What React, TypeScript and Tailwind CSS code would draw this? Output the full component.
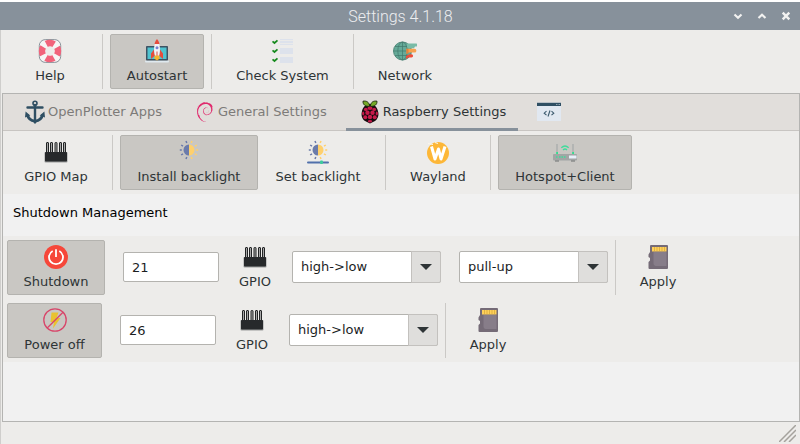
import type { ReactNode } from "react";
import { SiDebian } from "react-icons/si";

const icon = "h-6 w-6 shrink-0";

function HelpIcon() {
  return (
    <svg viewBox="0 0 24 24" className={icon} aria-hidden="true">
      <rect x="1.3" y="0.6" width="21.4" height="22.8" rx="6" fill="#f6f5f5" stroke="#7d8790" strokeWidth="0.9" />
      <circle
        cx="12" cy="12" r="7.900" fill="none" stroke="#f1637b" strokeWidth="6.600"
        strokeDasharray="8.2 4.209" strokeDashoffset="4.1"
      />
      <circle cx="12" cy="12" r="4.600" fill="#edecea" />
    </svg>
  );
}

function RocketIcon() {
  return (
    <svg viewBox="0 0 24 24" className={icon} aria-hidden="true">
      <rect x="0" y="21.5" width="24" height="2" rx="1" fill="#dfe9ef" />
      <rect x="1" y="7" width="22" height="14.5" rx="0.8" fill="#3e5263" />
      <rect x="2.5" y="8.5" width="19" height="11.5" fill="#4fc3d0" />
      <path d="M9 10.500 L6 14.500 V20 L10 16.500 Z M15 10.500 L18 14.500 V20 L14 16.500 Z" fill="#e64c3c" />
      <path d="M12 0.5 C15.5 5 15.5 12 14 17 H10 C8.500 12 8.500 5 12 0.5Z" fill="#f3f3f6" />
      <path d="M12 0 C13.500 1.500 14.200 3.500 14.500 5 H9.500 C9.800 3.500 10.500 1.500 12 0Z" fill="#e64c3c" />
      <circle cx="12" cy="8.800" r="1.500" fill="#7a7fd0" />
      <path d="M11.500 12.500 h1 v5 h-1z" fill="#d85048" />
      <path d="M9.800 16.500 H14.200 L14.800 19.500 L12 21.500 L9.200 19.500Z" fill="#f6b62c" />
    </svg>
  );
}

function ChecklistIcon() {
  return (
    <svg viewBox="0 0 24 24" className={icon} aria-hidden="true">
      <path d="M9 0h13v6H9zM9 9h13v6H9zM9 18h13v6H9z" fill="#dde2ec" />
      <path d="M9 1.500h13M9 4.500h13" stroke="#edecea" strokeWidth="0.8" />
      <path d="M1.500 2.300 L3.500 4 L6.500 1.300 M1.500 11.300 L3.500 13 L6.500 10.300 M1.500 20.300 L3.500 22 L6.500 19.300" fill="none" stroke="#168a1c" strokeWidth="1.700" />
    </svg>
  );
}

function NetworkIcon() {
  return (
    <svg viewBox="0 0 24 24" className={icon} aria-hidden="true">
      <circle cx="9.500" cy="12" r="9" fill="#65aa98" stroke="#4a8274" strokeWidth="0.9" />
      <path d="M9.500 3v18M0.500 12h18M2 7.500h15M2 16.500h15" stroke="#42786c" strokeWidth="0.7" />
      <ellipse cx="9.500" cy="12" rx="4.700" ry="9" fill="none" stroke="#42786c" strokeWidth="0.7" />
      <path d="M14 4.500h9a1 1 0 0 1 0 3H22l-1 1.700h-5l-2-1z" fill="#79bba6" />
      <path d="M13.500 9.800h8a1.900 1.900 0 0 1 0 3.800h-6l-2 1.300z" fill="#f8a24e" />
      <path d="M13 17l3.500-1.800h2a1.600 1.600 0 0 1 0 3.200h-3.500l-2 1.600z" fill="#ef4d38" />
      <path d="M13.500 9.500l2 0.700v4l-2 0.800z" fill="#e4813c" />
    </svg>
  );
}

function AnchorIcon() {
  return (
    <svg viewBox="0 0 24 24" className={icon} aria-hidden="true">
      <circle cx="12" cy="3.200" r="2" fill="none" stroke="#2f4f63" strokeWidth="1.600" />
      <path d="M12 5v17M4.500 7.500h15" stroke="#2f4f63" strokeWidth="2.400" strokeLinecap="round" />
      <path d="M4.300 14.500C5 18 8 20.700 12 21.200C16 20.700 19 18 19.700 14.500" fill="none" stroke="#2f4f63" strokeWidth="2.800" />
      <path d="M2 17.500L2.600 11.600L7.300 15.400Z M22 17.500L21.400 11.600L16.700 15.400Z M9.500 21L12 24L14.500 21Z" fill="#2f4f63" />
    </svg>
  );
}

function RaspberryIcon() {
  return (
    <svg viewBox="0 0 24 24" className={icon} aria-hidden="true">
      <path d="M12 4C17 4 19.500 8 20.200 12C21 15 20 19 17 21L12 23.500L7 21C4 19 3 15 3.800 12C4.500 8 7 4 12 4Z" fill="#160a0e" />
      <path d="M11.700 6.300C7.500 6.800 4.700 4.500 5 1.200C8.500 0.500 11.300 2.200 11.700 6.300ZM12.300 6.300C16.500 6.800 19.300 4.500 19 1.200C15.500 0.500 12.700 2.200 12.300 6.300Z" fill="#75a928" stroke="#1c2610" strokeWidth="0.9" />
      <g fill="#c51a4a">
        <ellipse cx="12" cy="8.300" rx="2.600" ry="1.700" />
        <ellipse cx="7.800" cy="9.400" rx="1.900" ry="1.700" />
        <ellipse cx="16.200" cy="9.400" rx="1.900" ry="1.700" />
        <circle cx="9.500" cy="12.700" r="2.200" />
        <circle cx="14.500" cy="12.700" r="2.200" />
        <ellipse cx="5.200" cy="13.500" rx="1.100" ry="2.100" />
        <ellipse cx="18.800" cy="13.500" rx="1.100" ry="2.100" />
        <circle cx="12" cy="17" r="2.200" />
        <circle cx="7.300" cy="17.300" r="2" />
        <circle cx="16.700" cy="17.300" r="2" />
        <ellipse cx="12" cy="21.200" rx="2.200" ry="1.300" />
      </g>
    </svg>
  );
}

function CodeWindowIcon() {
  return (
    <svg viewBox="0 0 24 24" className={icon} aria-hidden="true">
      <rect x="0" y="2.500" width="24" height="18.500" fill="#e1e8f1" />
      <rect x="0" y="2" width="24" height="1" fill="#b9c0c6" />
      <rect x="0" y="3" width="24" height="3" fill="#2f4f63" />
      <path d="M19 4.500h4" stroke="#8fa2af" strokeWidth="1" strokeDasharray="1 0.5" />
      <path d="M9.500 11.200L7.200 13.200L9.500 15.200M14.500 11.200L16.800 13.200L14.500 15.200M13 10.500L11 16.500" fill="none" stroke="#3c5a6e" strokeWidth="1.100" />
    </svg>
  );
}

function PinsIcon() {
  return (
    <svg viewBox="0 0 24 24" className={icon} aria-hidden="true">
      <g fill="#a7a7a7" stroke="#222425" strokeWidth="1">
        <rect x="2.500" y="2.500" width="2" height="11" rx="0.5" />
        <rect x="6.500" y="2.500" width="2" height="11" rx="0.5" />
        <rect x="11" y="2.500" width="2" height="11" rx="0.5" />
        <rect x="15.500" y="2.500" width="2" height="11" rx="0.5" />
        <rect x="19.500" y="2.500" width="2" height="11" rx="0.5" />
      </g>
      <rect x="0.500" y="12" width="23" height="10.500" rx="1" fill="#9b9c9c" />
      <rect x="1" y="12" width="22" height="9.500" rx="0.8" fill="#27292b" />
    </svg>
  );
}

function Sun() {
  return (
    <g>
      <path d="M12 4.500a5.500 5.500 0 0 0 0 11z" fill="#6b7bab" />
      <path d="M12 4.500a5.500 5.500 0 0 1 0 11z" fill="#ffd06c" />
      <path d="M9.800 3L9 1M6 6.200L4.200 5M4.800 10H2.800M6 13.800L4.200 15M9.800 17L9 19" stroke="#6b7bab" strokeWidth="1.500" />
      <path d="M14.200 3L15 1M18 6.200L19.800 5M19.200 10h2M18 13.800L19.800 15M14.200 17L15 19" stroke="#ffd06c" strokeWidth="1.500" />
    </g>
  );
}

function SunIcon() {
  return (
    <svg viewBox="0 0 24 24" className={icon} aria-hidden="true">
      <Sun />
    </svg>
  );
}

function SunSliderIcon() {
  return (
    <svg viewBox="0 0 24 24" className={icon} aria-hidden="true">
      <Sun />
      <path d="M2 22.500h20" stroke="#5170ab" strokeWidth="2" strokeLinecap="round" />
      <rect x="14" y="20.500" width="3" height="3.500" rx="1" fill="#3ccb9b" />
    </svg>
  );
}

function WaylandIcon() {
  return (
    <svg viewBox="0 0 24 24" className={icon} aria-hidden="true">
      <circle cx="12" cy="13" r="11" fill="#fdb737" />
      <path d="M5.500 6.500L9 19L12.500 9L15 19L19 6.500" fill="none" stroke="#ffffff" strokeWidth="3" strokeLinejoin="round" />
      <path d="M2 3.500l5 1M9 2.500l3 1" stroke="#fbf6ea" strokeWidth="1.200" />
    </svg>
  );
}

function RouterIcon() {
  return (
    <svg viewBox="0 0 24 24" className={icon} aria-hidden="true">
      <path d="M4 4v10M20 4v10" stroke="#a5a9aa" strokeWidth="1.200" />
      <path d="M8.300 7.700Q12 4.300 15.700 7.700M10 10Q12 8 14 10" fill="none" stroke="#3fdc9b" strokeWidth="1.200" />
      <rect x="3.200" y="12" width="1.800" height="2" fill="#2fe08f" />
      <rect x="19.200" y="12" width="1.800" height="2" fill="#2fe08f" />
      <rect x="0" y="14" width="24" height="6.500" rx="1" fill="#a2a5a5" />
      <rect x="16" y="15.500" width="7.500" height="3" fill="#e8f0fa" />
      <path d="M3 17h1.500M6 17h7" stroke="#3fdc9b" strokeWidth="1.500" strokeDasharray="1.500 1" />
      <path d="M2 21h4M18 21h4" stroke="#6d7071" strokeWidth="1" />
    </svg>
  );
}

function PowerIcon() {
  return (
    <svg viewBox="0 0 24 24" className={icon} aria-hidden="true">
      <circle cx="12" cy="12" r="12" fill="#f6473a" />
      <path d="M8.700 6A7 7 0 1 0 15.300 6M12 4.300V12" fill="none" stroke="#ffffff" strokeWidth="1.800" />
    </svg>
  );
}

function NoPowerIcon() {
  return (
    <svg viewBox="0 0 24 24" className={icon} aria-hidden="true">
      <path d="M8.500 4.500H15.500L13.500 10H17.500L10 20.500L11 14H7.500Z" fill="#e9c22f" />
      <circle cx="12" cy="12" r="11.200" fill="none" stroke="#d8466a" strokeWidth="1.300" />
      <path d="M4.200 20L20 4.200" stroke="#d8466a" strokeWidth="1.300" />
    </svg>
  );
}

function CardIcon() {
  return (
    <svg viewBox="0 0 24 24" className={icon} aria-hidden="true">
      <path d="M4.500 0H21a1 1 0 0 1 1 1V23a1 1 0 0 1-1 1H3.500a1 1 0 0 1-1-1V17L4 15.500V13L2.500 12V9.500L4 7V1Z" fill="#756b77" />
      <path d="M7.500 7H20.500V21H9.500A2.500 2.500 0 0 1 7.500 18.500Z" fill="#877d89" />
      <rect x="6" y="2" width="14.500" height="4.500" fill="#ffd05a" />
      <path d="M8.500 2v4M11 2v4M13.500 2v4M16 2v4M18.500 2v4" stroke="#d7a93e" strokeWidth="0.8" />
    </svg>
  );
}

function ToolButton({ label, picture, width, raised = false }: { label: string; picture: ReactNode; width: string; raised?: boolean }) {
  const look = raised ? "rounded-xs border-[#b4b3af] bg-[#c9c7c3]" : "border-transparent";
  return (
    <button type="button" className={`flex h-[55px] shrink-0 flex-col items-center gap-[3px] border pt-1 ${look} ${width}`}>
      {picture}
      <span className="leading-5 whitespace-nowrap">{label}</span>
    </button>
  );
}

function Divider() {
  return <div className="mx-[7px] w-px shrink-0 self-stretch bg-[#cbc9c6]" />;
}

function Tab({ label, picture, active = false }: { label?: string; picture: ReactNode; active?: boolean }) {
  const look = active ? "border-[#87919b] text-[#2e3436]" : "border-transparent text-[#7d7b79]";
  return (
    <button
      type="button" role="tab" aria-selected={active} aria-label={label ?? "Scripts"}
      className={`-mb-px flex shrink-0 items-center gap-px border-b-3 px-3 pt-0.5 whitespace-nowrap ${look}`}
    >
      {picture}
      {label && <span>{label}</span>}
    </button>
  );
}

function Combo({ label, options }: { label: string; options: string[] }) {
  return (
    <div className="relative mb-px h-8 w-[149px] shrink-0">
      <select aria-label={label} className="h-full w-full appearance-none rounded-xs border border-[#b4b3af] bg-white pr-8 pl-2 text-[#1c1e1f]">
        {options.map((o) => (
          <option key={o}>{o}</option>
        ))}
      </select>
      <div className="pointer-events-none absolute inset-y-0 right-0 flex w-[30px] items-center justify-center rounded-r-xs border border-[#c3c1be] bg-[#dfdedc]">
        <svg viewBox="0 0 12 6" className="h-1.5 w-3" aria-hidden="true">
          <path d="M0 0H12L6 6Z" fill="#2e3436" />
        </svg>
      </div>
    </div>
  );
}

function PinInput({ label, value }: { label: string; value: string }) {
  return (
    <input
      type="text" aria-label={label} defaultValue={value}
      className="mb-px ml-[18px] h-[30px] w-24 shrink-0 rounded-xs border border-[#b4b3af] bg-white px-2 text-[#1c1e1f]"
    />
  );
}

const edges = ["high->low", "low->high"];

export default function App() {
  return (
    <div className="flex min-h-screen flex-col bg-[#edecea] font-['DejaVu_Sans',sans-serif] text-[13px] text-[#2e3436]">
      <header className="grid h-[30px] shrink-0 grid-cols-[1fr_auto_1fr] items-center border-t-2 border-white bg-[#87919b]">
        <h1 className="col-start-2 pt-px pl-px font-[Roboto,sans-serif] text-base font-light text-[#edeef0]">Settings 4.1.18</h1>
        <div className="flex justify-end gap-2 pr-1.5 text-[#f2f2f1]">
          <button type="button" aria-label="Minimize" className="flex size-4 items-center justify-center">
            <svg viewBox="0 0 10 10" className="size-2.5"><path d="M1.500 3.500L5 6.700L8.500 3.500" fill="none" stroke="currentColor" strokeWidth="2.200" /></svg>
          </button>
          <button type="button" aria-label="Maximize" className="flex size-4 items-center justify-center">
            <svg viewBox="0 0 10 10" className="size-2.5"><path d="M1.500 7L5 3.800L8.500 7" fill="none" stroke="currentColor" strokeWidth="2.200" /></svg>
          </button>
          <button type="button" aria-label="Close" className="flex size-4 items-center justify-center">
            <svg viewBox="0 0 10 10" className="size-2.5"><path d="M1.700 1.700L8.300 8.300M8.300 1.700L1.700 8.300" fill="none" stroke="currentColor" strokeWidth="2.400" /></svg>
          </button>
        </div>
      </header>

      <div className="flex grow flex-col border-l border-[#cfcecc]">
        <nav className="flex h-[63px] shrink-0 py-1 pl-1">
          <ToolButton label="Help" picture={<HelpIcon />} width="w-[90px]" />
          <Divider />
          <ToolButton label="Autostart" picture={<RocketIcon />} width="w-[94px]" raised />
          <Divider />
          <ToolButton label="Check System" picture={<ChecklistIcon />} width="w-[127px]" />
          <Divider />
          <ToolButton label="Network" picture={<NetworkIcon />} width="w-[88px]" />
        </nav>

        <main className="ml-px flex grow flex-col border border-[#b4b4b2] bg-[#f1f1f1]">
          <div role="tablist" className="flex h-[37px] shrink-0 gap-[7px] border-b border-[#c8c5c2] bg-[#e1dedb] pl-2">
            <Tab label="OpenPlotter Apps" picture={<AnchorIcon />} />
            <Tab
              label="General Settings"
              picture={<span className="flex size-6 items-center justify-center"><SiDebian className="size-5 text-[#e0286c]" /></span>}
            />
            <Tab label="Raspberry Settings" picture={<RaspberryIcon />} active />
            <Tab picture={<CodeWindowIcon />} />
          </div>

          <div className="flex h-[63px] shrink-0 bg-[#edecea] py-1 pl-1">
            <ToolButton label="GPIO Map" picture={<PinsIcon />} width="w-[98px]" />
            <Divider />
            <ToolButton label="Install backlight" picture={<SunIcon />} width="w-[138px]" raised />
            <ToolButton label="Set backlight" picture={<SunSliderIcon />} width="w-[120px]" />
            <Divider />
            <ToolButton label="Wayland" picture={<WaylandIcon />} width="w-[90px]" />
            <Divider />
            <ToolButton label="Hotspot+Client" picture={<RouterIcon />} width="w-[134px]" raised />
          </div>

          <h2 className="flex h-[42px] shrink-0 items-center pb-1 pl-2.5 text-black">Shutdown Management</h2>

          <section className="flex shrink-0 flex-col gap-2 bg-[#edecea] py-1 pl-1">
            <div className="flex items-center">
              <ToolButton label="Shutdown" picture={<PowerIcon />} width="w-[98px]" raised />
              <PinInput label="Shutdown GPIO" value="21" />
              <ToolButton label="GPIO" picture={<PinsIcon />} width="mr-px w-[72px]" />
              <div className="flex gap-[18px]">
                <Combo label="Shutdown edge" options={edges} />
                <Combo label="Shutdown pull" options={["pull-up", "pull-down"]} />
              </div>
              <Divider />
              <ToolButton label="Apply" picture={<CardIcon />} width="w-[70px]" />
            </div>
            <div className="flex items-center">
              <ToolButton label="Power off" picture={<NoPowerIcon />} width="w-[95px]" raised />
              <PinInput label="Power off GPIO" value="26" />
              <ToolButton label="GPIO" picture={<PinsIcon />} width="mr-px w-[72px]" />
              <Combo label="Power off edge" options={edges} />
              <Divider />
              <ToolButton label="Apply" picture={<CardIcon />} width="w-[70px]" />
            </div>
          </section>
        </main>

        <footer className="flex h-[22px] shrink-0 items-start justify-end pt-[3px] pr-1">
          <svg viewBox="0 0 17 17" className="size-[17px]" aria-hidden="true">
            <path d="M0 17L17 0M5 17L17 5M10 17L17 10" stroke="#a5a29d" strokeWidth="1.500" />
          </svg>
        </footer>
      </div>
    </div>
  );
}
